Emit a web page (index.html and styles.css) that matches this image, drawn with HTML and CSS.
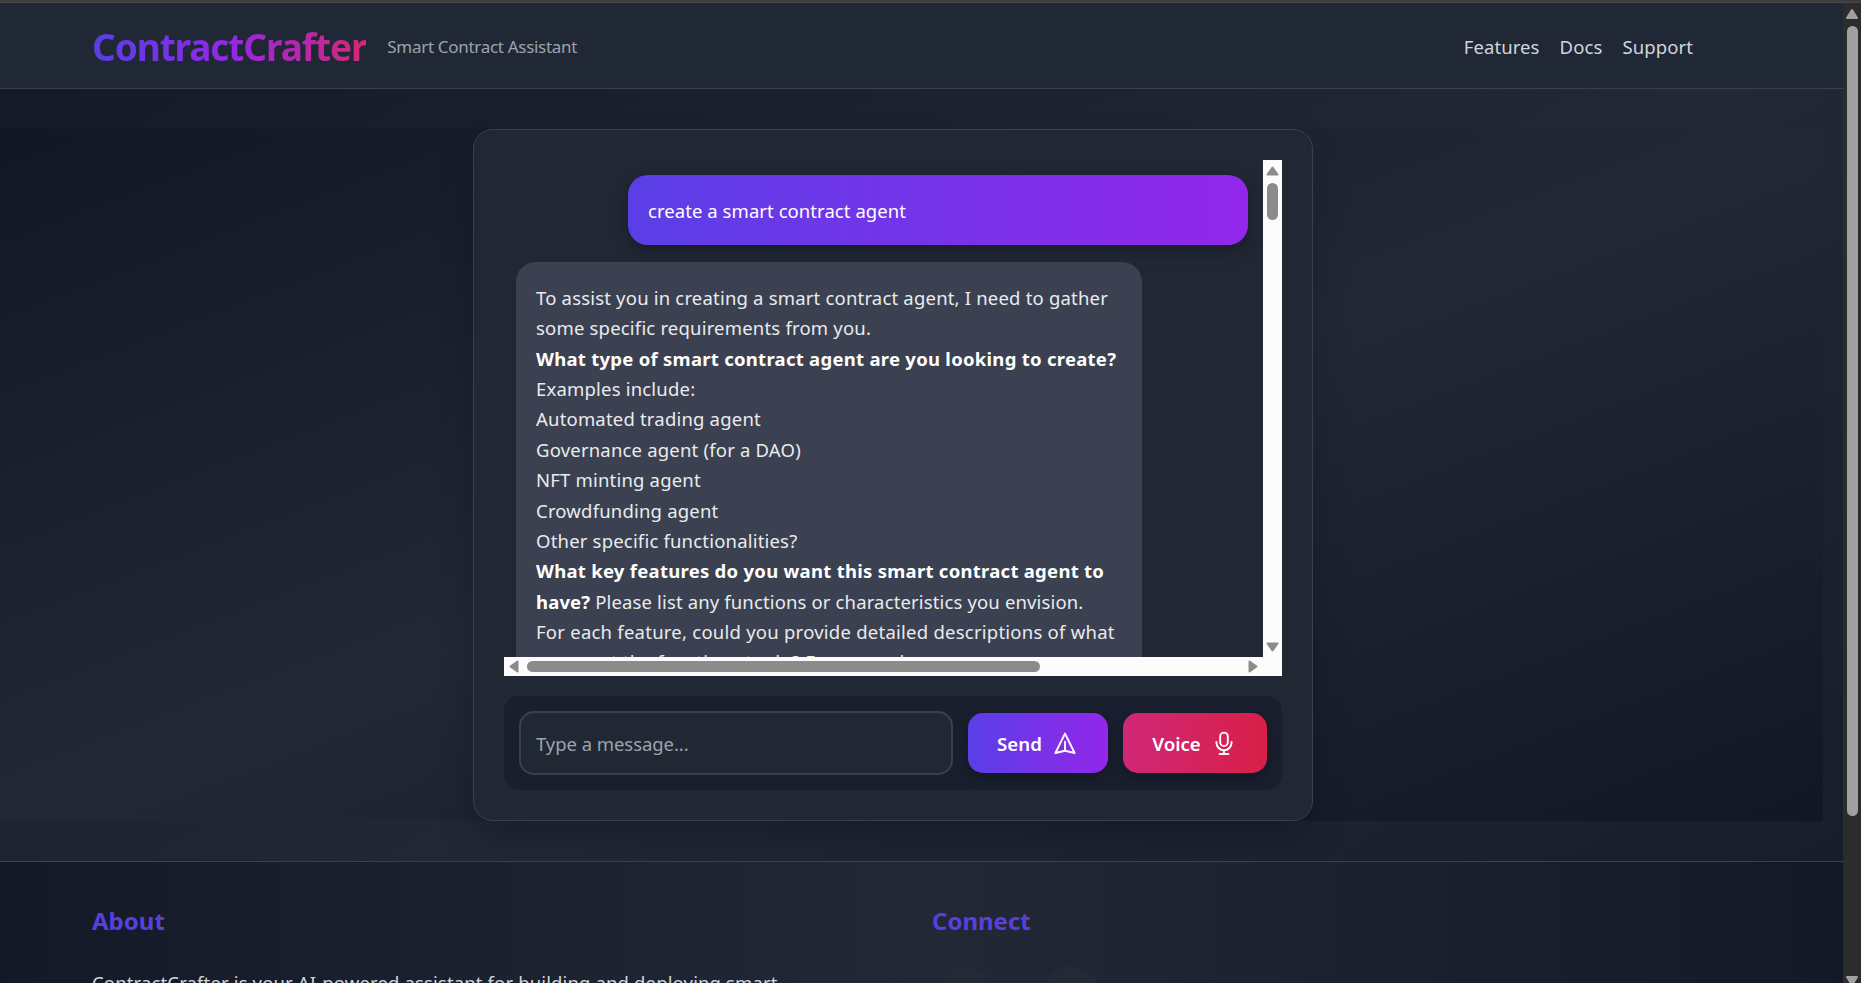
FILE: index.html
```
<!DOCTYPE html>
<html lang="en">
<head>
<meta charset="utf-8">
<title>ContractCrafter</title>
<link rel="stylesheet" href="styles.css">
</head>
<body>
<div class="window-edge"></div>
<div class="viewport">
  <div class="page">
    <header class="header">
      <div class="brand"><span class="logo">ContractCrafter</span><span class="tagline">Smart Contract Assistant</span></div>
      <nav class="nav"><a>Features</a><a>Docs</a><a>Support</a></nav>
    </header>
    <main class="main">
      <div class="stage">
        <section class="card">
          <div class="chat">
            <div class="messages">
              <div class="bubble user">create a smart contract agent</div>
              <div class="bubble bot">
                <div>To assist you in creating a smart contract agent, I need to gather</div>
                <div>some specific requirements from you.</div>
                <div><b>What type of smart contract agent are you looking to create?</b></div>
                <div>Examples include:</div>
                <div>Automated trading agent</div>
                <div>Governance agent (for a DAO)</div>
                <div>NFT minting agent</div>
                <div>Crowdfunding agent</div>
                <div>Other specific functionalities?</div>
                <div><b>What key features do you want this smart contract agent to</b></div>
                <div class="snug"><b>have?</b> Please list any functions or characteristics you envision.</div>
                <div class="loose">For each feature, could you provide detailed descriptions of what</div>
                <div class="loose">you want the functions to do? For example,</div>
              </div>
            </div>
            <div class="vbar">
              <svg width="13" height="10" viewBox="0 0 13 10"><path d="M6.5 1.5 11.5 8.5H1.5Z"/></svg>
              <i class="vthumb"></i>
              <svg class="down" width="13" height="10" viewBox="0 0 13 10"><path d="M6.5 8.5 11.5 1.5H1.5Z"/></svg>
            </div>
            <div class="hbar">
              <svg width="10" height="13" viewBox="0 0 10 13"><path d="M1.5 6.5 8.5 1.5V11.5Z"/></svg>
              <i class="hthumb"></i>
              <svg class="right" width="10" height="13" viewBox="0 0 10 13"><path d="M8.5 6.5 1.5 1.5V11.5Z"/></svg>
            </div>
          </div>
          <div class="composer">
            <div class="input">Type a message...</div>
            <button class="btn send"><span>Send</span>
              <svg width="24" height="24" viewBox="0 0 24 24"><path d="M12 2.6 21.6 22 12 19.8 2.4 22ZM12 19.6V10.6"/></svg></button>
            <button class="btn voice"><span>Voice</span>
              <svg width="24" height="24" viewBox="0 0 24 24"><rect x="8.2" y="1.6" width="7.6" height="13.4" rx="3.8"/><path d="M4.4 11v.6a7.6 7.6 0 0 0 15.2 0V11M12 19.2V23M7.6 23h8.8"/></svg></button>
          </div>
        </section>
      </div>
    </main>
    <footer class="footer">
      <div class="col"><h3>About</h3><p>ContractCrafter is your AI-powered assistant for building and deploying smart</p></div>
      <div class="col"><h3>Connect</h3><div class="social"><i></i><i></i></div></div>
    </footer>
  </div>
  <div class="pagebar">
    <svg width="14" height="12" viewBox="0 0 14 12"><path d="M7 2 12 10H2Z"/></svg>
    <i class="pagethumb"></i>
    <svg class="pagedown" width="14" height="12" viewBox="0 0 14 12"><path d="M7 10 12 2H2Z"/></svg>
  </div>
</div>
</body>
</html>
```
FILE: styles.css
```
* { box-sizing: border-box; }
body { margin: 0; width: 1861px; height: 983px; overflow: hidden; font-family: "Noto Sans", "Open Sans", sans-serif; font-size: 18.5px; color: #e9ebef; background: #141a28; }
.window-edge { height: 3px; background: #3d3d3d; border-bottom: 1px solid #474747; }
.viewport { display: flex; height: 980px; overflow: hidden; }
.page { width: 1843px; height: 1184px; background: linear-gradient(to bottom right, #131927, #222836 50%, #131927); }
.header { height: 86px; display: flex; justify-content: space-between; align-items: center; padding: 2px 150px 0 92px; background: #212835; border-bottom: 1px solid #394150; }
.brand { display: flex; align-items: center; gap: 21px; white-space: nowrap; }
.logo { font-size: 37px; line-height: 50px; letter-spacing: -1.1px; font-weight: 700; background: linear-gradient(to right, #5640e4, #9327e8 50%, #d62873); -webkit-background-clip: text; background-clip: text; color: transparent; }
.tagline { font-size: 17px; letter-spacing: -.3px; padding-bottom: 1px; color: #9ca3af; }
.nav { display: flex; gap: 20px; letter-spacing: .1px; padding-bottom: 1px; color: #d1d5db; }
.main { height: 772px; padding-top: 40px; }
.stage { width: 1823px; height: 692px; padding-left: 473px; background: linear-gradient(to bottom right, #111725, #222835 50%, #111725); }
.card { width: 840px; height: 692px; padding: 30px; border: 1px solid #394150; border-radius: 20px; background: #212834; box-shadow: 0 20px 40px -10px rgba(5, 8, 18, .35); }
.chat { width: 778px; height: 516px; display: grid; grid-template: 497px 19px / 759px 19px; }
.messages { overflow: hidden; padding: 15px 15px 0 12px; display: flex; flex-direction: column; white-space: nowrap; }
.bubble { border-radius: 20px; padding: 21px 20px 19px; line-height: 30.36px; letter-spacing: .19px; flex: none; }
.user { align-self: flex-end; width: 620px; height: 70px; letter-spacing: .06px; background: linear-gradient(to right, #5a3fe6, #9327ea); color: #fff; box-shadow: 0 6px 14px rgba(10, 12, 24, .4); }
.bot { width: 626px; height: 560px; margin-top: 17px; background: #3b4150; }
.bot b { color: #fff; letter-spacing: .27px; }
.bot .snug, .bot .snug b { letter-spacing: .14px; }
.bot .loose { letter-spacing: .24px; }
.vbar { background: #fcfcfc; display: flex; flex-direction: column; align-items: center; padding: 6px 0 5px; grid-row: 1; grid-column: 2; }
.vbar svg, .hbar svg { fill: #8b8b8b; stroke: #8b8b8b; stroke-width: 2; stroke-linejoin: round; flex: none; }
.vthumb { width: 11px; height: 37px; margin-top: 7px; border-radius: 6px; background: #8b8b8b; }
.down { margin-top: auto; }
.hbar { grid-column: 1 / 3; background: #fcfcfc; display: flex; align-items: center; padding: 0 24px 0 5px; }
.hthumb { width: 513px; height: 11px; margin-left: 8px; border-radius: 6px; background: #8b8b8b; }
.right { margin-left: auto; }
.composer { height: 94px; margin-top: 20px; padding: 0 15px; display: flex; align-items: center; gap: 15px; border-radius: 15px; background: #191f2e; }
.input { width: 434px; height: 64px; padding: 1px 15px 0; display: flex; align-items: center; border: 2px solid #394150; border-radius: 15px; background: #212834; color: #9ca3af; letter-spacing: -.06px; }
.btn { height: 60px; border: 0; border-radius: 15px; padding: 0 2px 0 0; display: flex; align-items: center; justify-content: center; gap: 11px; color: #fff; font: 600 18.7px "Noto Sans", "Open Sans", sans-serif; box-shadow: 0 5px 12px rgba(10, 12, 24, .4); }
.btn svg { fill: none; stroke: #fff; stroke-width: 1.9; stroke-linecap: round; stroke-linejoin: round; }
.send { width: 140px; background: linear-gradient(to right, #5a3fe6, #9327ea); }
.voice { width: 144px; background: linear-gradient(to right, #d02777, #d81f48); }
.footer { height: 323px; padding: 40px 92px 0; display: grid; grid-template-columns: 840px 1fr; border-top: 1px solid #394150; background: linear-gradient(to right, #131927, #222835 50%, #131927); }
.footer h3 { margin: 0; font-size: 24px; line-height: 38px; font-weight: 700; color: #5a3fdf; }
.footer p { margin: 28px 0 0; line-height: 30px; letter-spacing: .14px; color: #d1d5db; white-space: nowrap; }
.social { display: flex; gap: 48px; margin: 26px 0 0 4px; }
.social i { width: 58px; height: 58px; border-radius: 50%; background: #242a35; }
.pagebar { width: 18px; height: 980px; flex: none; background: #2c2c2c; display: flex; flex-direction: column; align-items: center; padding: 5px 0 0; }
.pagebar svg { fill: #a0a0a0; stroke: #a0a0a0; stroke-width: 2; stroke-linejoin: round; flex: none; }
.pagethumb { width: 11px; height: 790px; flex: none; margin-top: 6px; border-radius: 6px; background: #a0a0a0; }
.pagedown { margin-top: 159px; }
```
